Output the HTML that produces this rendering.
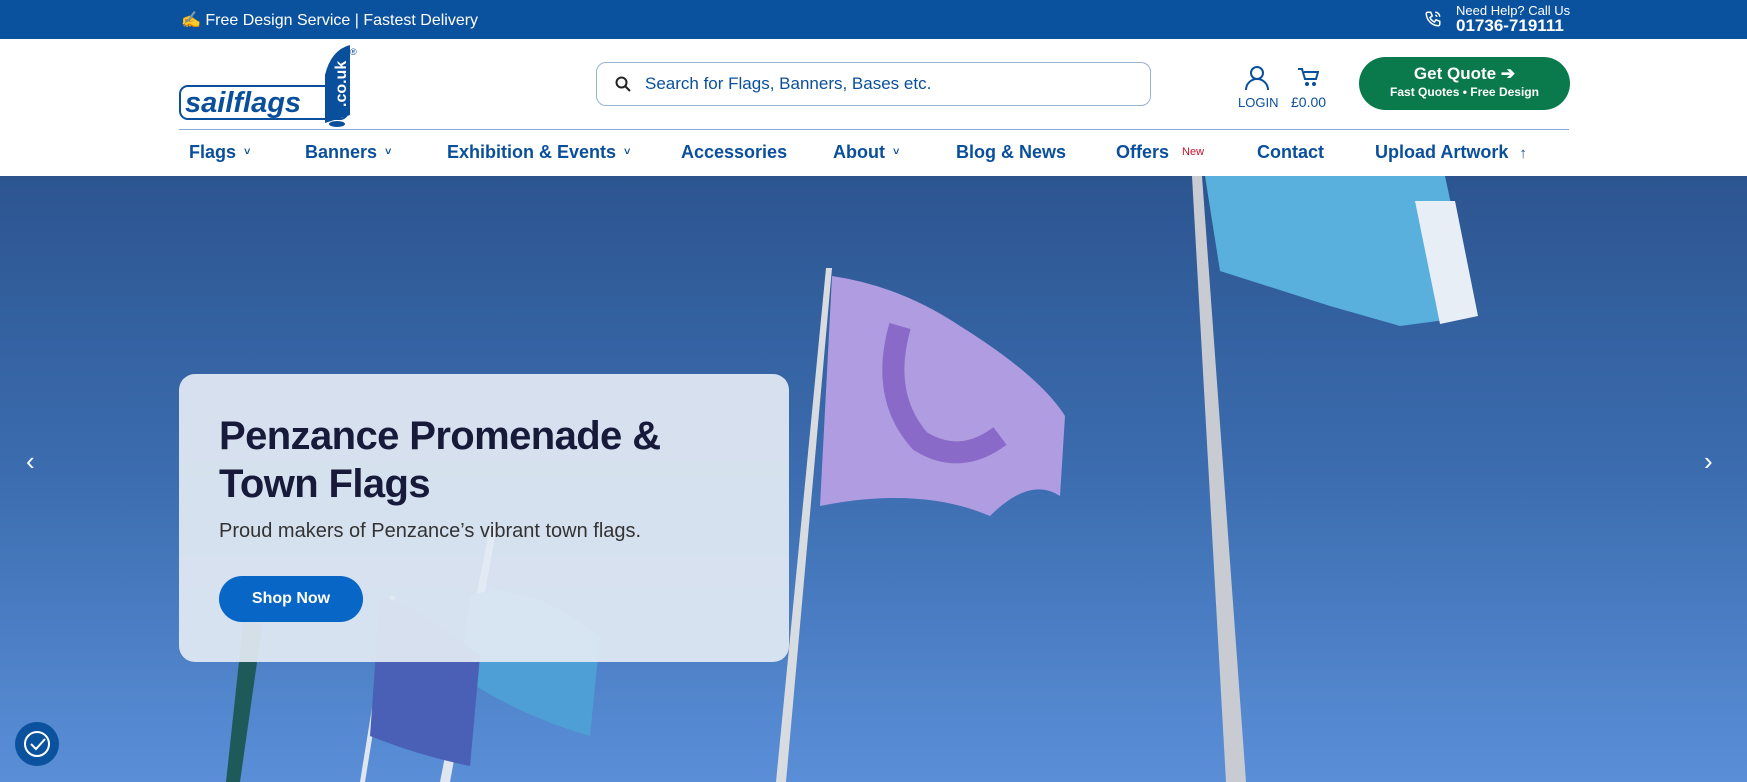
<!DOCTYPE html>
<html><head><meta charset="utf-8"><style>
*{margin:0;padding:0;box-sizing:border-box}
body{width:1747px;height:782px;overflow:hidden;font-family:"Liberation Sans",sans-serif;background:#fff;position:relative}
.top{height:39px;background:#0a529e;color:#fff;position:relative}
.top .l{position:absolute;left:181px;top:10px;font-size:16px}
.top .r{position:absolute;left:1456px;top:3px;font-size:13px;line-height:15px}
.top .r b{font-size:17px;display:block}
.hdr{position:absolute;top:39px;left:0;width:1747px;height:137px;background:#fff}
.search{position:absolute;left:596px;top:23px;width:555px;height:44px;border:1.5px solid #9bb3d3;border-radius:10px;font-size:17px;color:#0a4f9c;padding:11px 0 0 48px}
.line{position:absolute;left:179px;top:90px;width:1390px;height:1px;background:#8aa8d6}
.nav{position:absolute;top:103px;font-size:18px;color:#0a4f9c;font-weight:bold}
.chev{font-size:11px;margin-left:8px;vertical-align:3px}
.btn{position:absolute;left:1359px;top:18px;width:211px;height:53px;background:#0a7a4c;border-radius:27px;color:#fff;text-align:center;font-weight:bold;font-size:17px;padding-top:8px;line-height:18px}
.btn small{font-size:12px;display:block}
.hero{position:absolute;top:176px;left:0;width:1747px;height:606px;background:linear-gradient(#2c5590,#3c6db0 50%,#5a8fd8)}
.card{position:absolute;left:179px;top:374px;width:610px;height:288px;background:rgba(226,233,243,.93);border-radius:16px}
.card h1{position:absolute;left:40px;top:38px;font-size:40px;line-height:48px;color:#181a3a;letter-spacing:-0.6px}
.card p{position:absolute;left:40px;top:146px;font-size:20px;color:#333}
.shop{position:absolute;left:40px;top:202px;width:144px;height:46px;background:#0766c6;border-radius:23px;color:#fff;font-weight:bold;font-size:16px;text-align:center;line-height:46px}
</style></head><body>
<div class="top"><div class="l">✍ Free Design Service | Fastest Delivery</div>
<svg style="position:absolute;left:1424px;top:10px" width="18" height="18" viewBox="0 0 24 24" fill="none" stroke="#fff" stroke-width="2"><path d="M5 3h4l2 5-3 2a11 11 0 0 0 6 6l2-3 5 2v4a2 2 0 0 1-2 2A17 17 0 0 1 3 5a2 2 0 0 1 2-2M15 3a6 6 0 0 1 6 6M15 7a2 2 0 0 1 2 2"/></svg>
<div class="r">Need Help? Call Us<b>01736-719111</b></div></div>
<div class="hdr">
<svg style="position:absolute;left:179px;top:6px" width="180" height="84" viewBox="0 0 180 84"><rect x="1" y="41" width="168" height="33" rx="8" fill="#fff" stroke="#0a4f9c" stroke-width="2"/><text x="6" y="67" font-family="Liberation Sans" font-weight="bold" font-style="italic" font-size="29" fill="#0a4f9c">sailflags</text><path d="M146 78 L146 30 Q152 5 171 0 L171 70 Z" fill="#0a4f9c"/><text transform="translate(167,62) rotate(-90)" font-family="Liberation Sans" font-weight="bold" font-size="16" fill="#fff">.co.uk</text><ellipse cx="158" cy="79" rx="8" ry="3" fill="#0a4f9c"/><text x="171" y="10" font-size="9" fill="#0a4f9c">®</text></svg>
<div class="search"><svg style="position:absolute;left:18px;top:13px" width="16" height="16" viewBox="0 0 16 16" fill="none" stroke="#222" stroke-width="2"><circle cx="6.5" cy="6.5" r="5"/><path d="M10 10l5 5"/></svg>Search for Flags, Banners, Bases etc.</div>
<svg style="position:absolute;left:1244px;top:26px" width="26" height="26" viewBox="0 0 26 26" fill="none" stroke="#0a4f9c" stroke-width="2"><circle cx="13" cy="8" r="6"/><path d="M2 25a11 11 0 0 1 22 0"/></svg>
<div style="position:absolute;left:1238px;top:56px;font-size:13px;color:#0a4f9c">LOGIN</div>
<svg style="position:absolute;left:1297px;top:28px" width="22" height="20" viewBox="0 0 22 20" fill="none" stroke="#0a4f9c" stroke-width="2"><path d="M1 2h4l3 10h11l2-7H7"/><circle cx="10" cy="17" r="1"/><circle cx="17" cy="17" r="1"/></svg>
<div style="position:absolute;left:1291px;top:55px;font-size:14px;color:#0a4f9c">£0.00</div>
<div class="btn">Get Quote ➔<small>Fast Quotes • Free Design</small></div>
<div class="line"></div>
<div class="nav" style="left:189px">Flags<span class="chev">˅</span></div>
<div class="nav" style="left:305px">Banners<span class="chev">˅</span></div>
<div class="nav" style="left:447px">Exhibition &amp; Events<span class="chev">˅</span></div>
<div class="nav" style="left:681px">Accessories</div>
<div class="nav" style="left:833px">About<span class="chev">˅</span></div>
<div class="nav" style="left:956px">Blog &amp; News</div>
<div class="nav" style="left:1116px">Offers <span style="font-size:11px;color:#c8102e;font-weight:normal;margin-left:8px;vertical-align:3px">New</span></div>
<div class="nav" style="left:1257px">Contact</div>
<div class="nav" style="left:1375px">Upload Artwork <span style="font-size:15px;margin-left:6px">↑</span></div>
</div>
<div class="hero">
<svg width="1747" height="606" style="position:absolute;left:0;top:0">
<path d="M1202 0 L1192 0 L1226 606 L1246 606 Z" fill="#c8ccd2"/>
<path d="M1205 0 L1445 0 L1475 140 L1400 150 L1330 130 L1220 95 Z" fill="#5ab0dc"/>
<path d="M1415 25 L1455 25 L1478 140 L1440 148 Z" fill="#e8eef5"/>
<path d="M832 92 L826 92 L776 606 L786 606 Z" fill="#d8dce0"/>
<path d="M832 100 Q900 110 960 150 Q1040 200 1065 240 L1060 320 Q1030 300 990 340 Q920 310 820 330 Z" fill="#b09ce0"/>
<path d="M900 150 Q880 220 920 265 Q960 290 1000 260" stroke="#8a6ac8" stroke-width="22" fill="none"/>
<path d="M245 430 L265 430 L240 606 L226 606 Z" fill="#1f5a5a"/>
<path d="M390 420 L395 420 L365 606 L360 606 Z" fill="#e0e6ef"/>
<path d="M490 350 L497 350 L450 606 L440 606 Z" fill="#e0e6ef"/>
<path d="M470 420 Q520 400 600 460 L590 560 Q520 540 460 500 Z" fill="#4e9fd6"/>
<path d="M380 420 Q420 430 480 480 L470 590 Q420 580 370 560 Z" fill="#4a5fb6"/>
</svg>
<div style="position:absolute;left:26px;top:270px;color:#fff;font-size:26px">‹</div>
<div style="position:absolute;left:1704px;top:270px;color:#fff;font-size:26px">›</div>
<div style="position:absolute;left:15px;top:546px;width:44px;height:44px;border-radius:50%;background:#0a529e"><svg width="44" height="44" viewBox="0 0 44 44" fill="none" stroke="#fff" stroke-width="2"><circle cx="22" cy="22" r="12"/><path d="M16 22l5 5 9-10"/></svg></div>
</div>
<div class="card"><h1>Penzance Promenade &amp;<br>Town Flags</h1><p>Proud makers of Penzance’s vibrant town flags.</p><div class="shop">Shop Now</div></div>
</body></html>
